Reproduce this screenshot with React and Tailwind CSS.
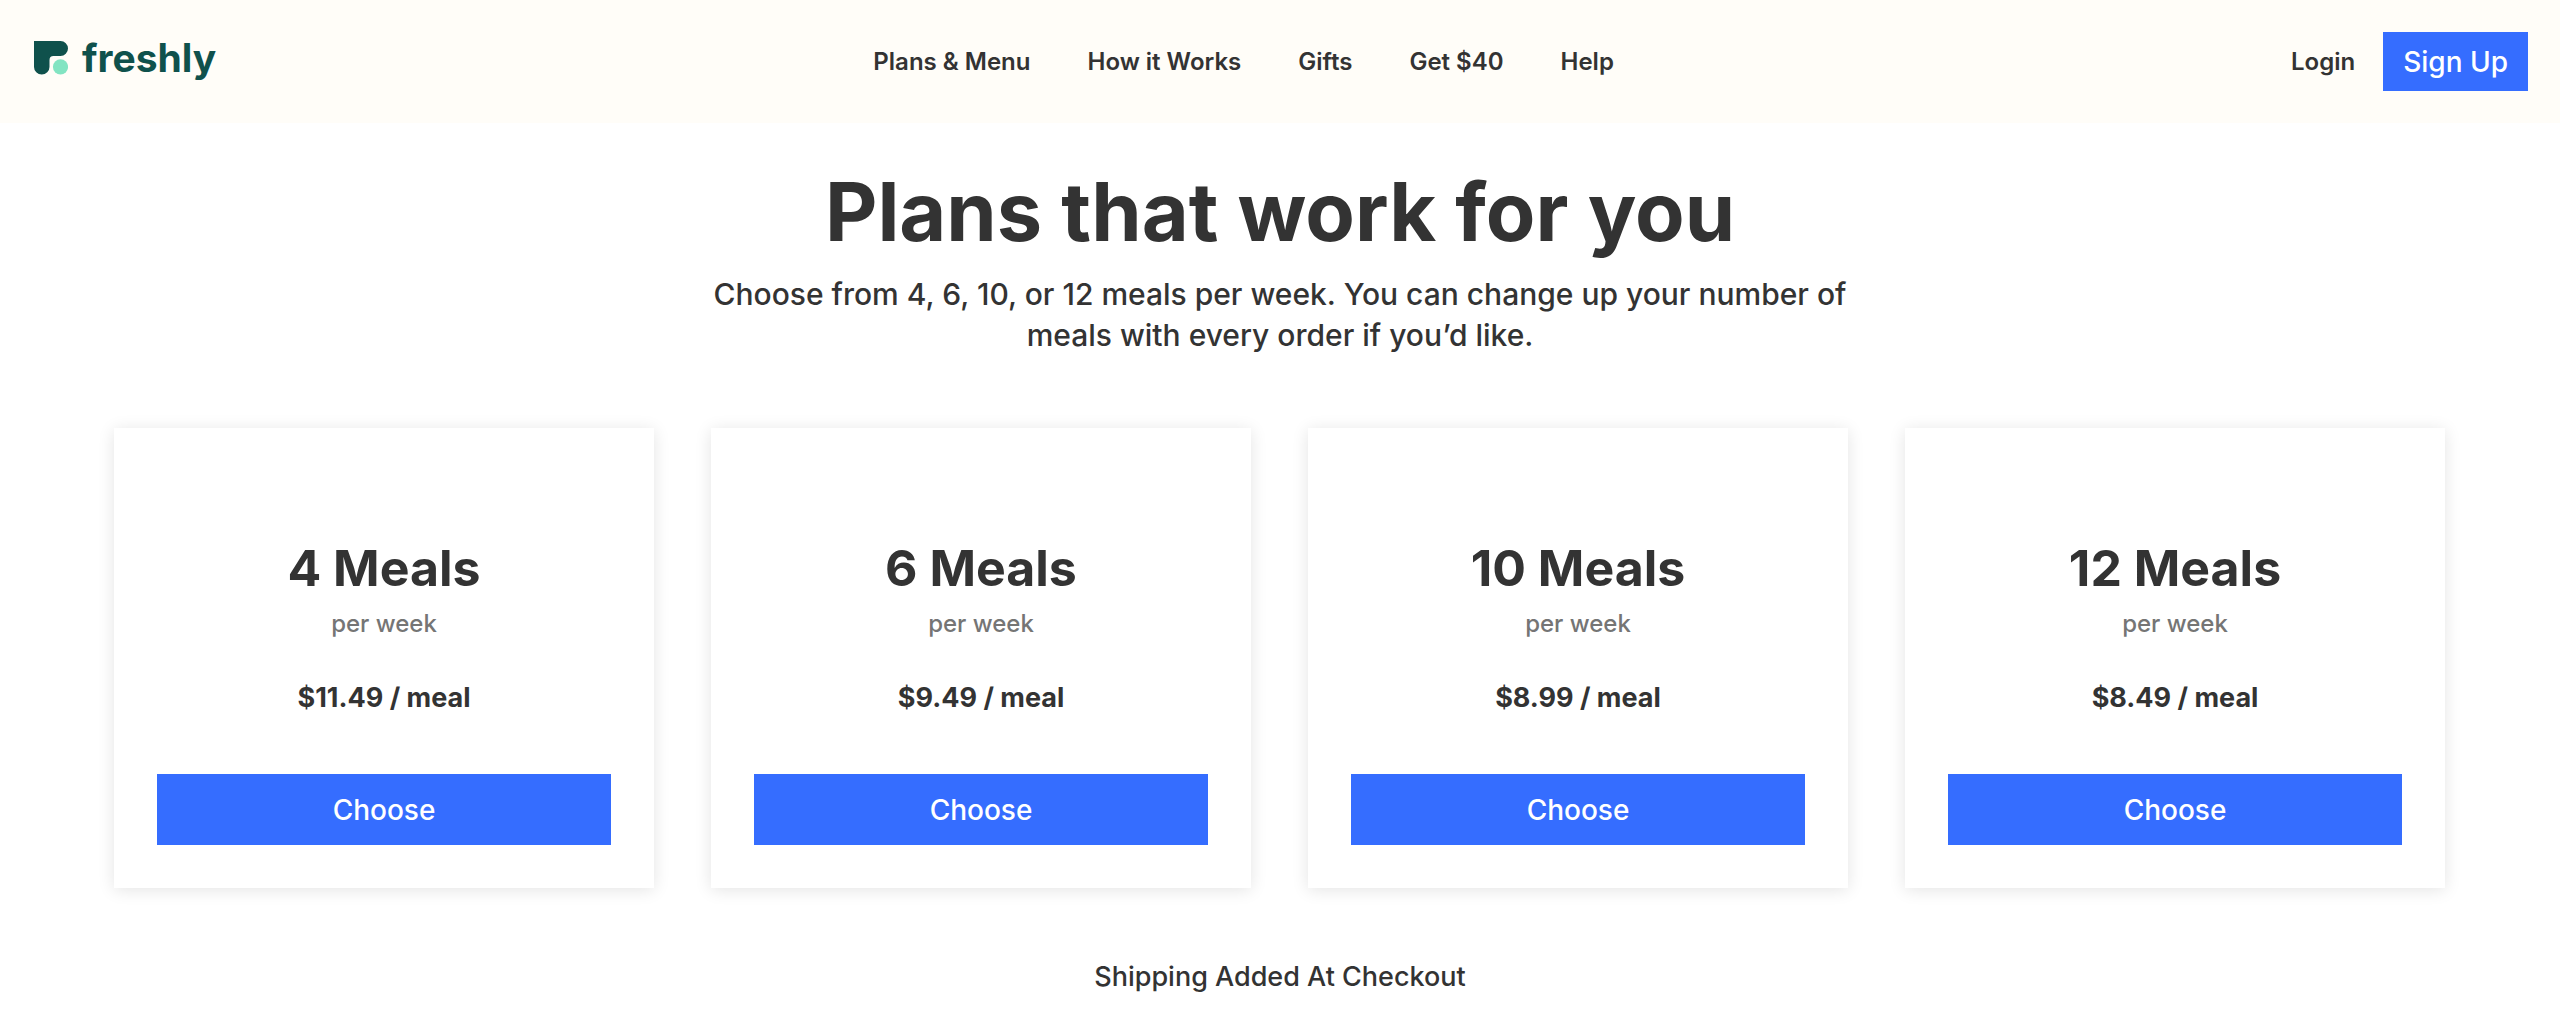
import React from 'react';

// ── Data ──────────────────────────────────────────────────────────────────────
const NAV_LINKS = ['Plans & Menu', 'How it Works', 'Gifts', 'Get $40', 'Help'];

const PLANS = [
  { meals: 4,  price: '$11.49' },
  { meals: 6,  price: '$9.49'  },
  { meals: 10, price: '$8.99'  },
  { meals: 12, price: '$8.49'  },
];

// ── Logo ──────────────────────────────────────────────────────────────────────
function Logo() {
  return (
    <a href="#" className="flex items-center gap-[14px] pb-2">
      <svg className="w-[34px] h-[34px]" viewBox="0 0 34 34">
        <path
          fill="#0f514c"
          d="M0 0H26.5A7.5 7.5 0 0 1 26.5 15H19.5Q15.500 15 15.500 19V26A7.750 7.500 0 0 1 0 26Z"
        />
        <circle cx="26.500" cy="25.800" r="7.600" fill="#82e4c2" />
      </svg>
      <span className="text-[39px] leading-[48px] font-bold text-[#0f514c]">freshly</span>
    </a>
  );
}

// ── Header ────────────────────────────────────────────────────────────────────
function Header() {
  return (
    <header className="flex items-center justify-between h-[123px] pl-[34px] pr-8 bg-[#fffdf8]">
      <Logo />
      <nav className="flex gap-[57px] pr-5">
        {NAV_LINKS.map(label => (
          <a key={label} href="#" className="text-2xl font-semibold">{label}</a>
        ))}
      </nav>
      <div className="flex items-center gap-7">
        <a href="#" className="text-2xl font-semibold">Login</a>
        <button className="h-[59px] px-5 bg-[#356dff] text-white text-[28px] font-medium">
          Sign Up
        </button>
      </div>
    </header>
  );
}

// ── Plan Card ─────────────────────────────────────────────────────────────────
function PlanCard({ plan }) {
  return (
    <div className="bg-white px-[43px] pt-[108px] pb-[43px] text-center shadow-[0_2px_16px_rgba(0,0,0,0.11)]">
      <h2 className="text-[50px] leading-[64px] font-bold">{plan.meals} Meals</h2>
      <p className="mt-2 text-2xl leading-8 font-medium text-[#757575]">per week</p>
      <p className="mt-10 text-[27px] leading-9 font-bold">{plan.price} / meal</p>
      <button className="mt-[58px] w-full h-[71px] bg-[#356dff] text-white text-[28px] font-medium">
        Choose
      </button>
    </div>
  );
}

// ── Main Page ─────────────────────────────────────────────────────────────────
export default function App() {
  return (
    <div className="min-h-screen bg-white text-[#333333] font-['Inter',sans-serif]">
      <Header />

      <main className="pt-[39px] pb-8">
        <div className="text-center">
          <h1 className="text-[81px] leading-[100px] font-bold">Plans that work for you</h1>
          <p className="mx-auto mt-3 max-w-[1200px] text-[30px] leading-[41px] font-medium">
            Choose from 4, 6, 10, or 12 meals per week. You can change up your number of
            meals with every order if you’d like.
          </p>
        </div>

        <div className="grid grid-cols-4 gap-[57px] mt-[72px] pl-[114px] pr-[115px]">
          {PLANS.map(plan => (
            <PlanCard key={plan.meals} plan={plan} />
          ))}
        </div>

        <p className="mt-[71px] text-center text-[27px] leading-9 font-medium">
          Shipping Added At Checkout
        </p>
      </main>
    </div>
  );
}
